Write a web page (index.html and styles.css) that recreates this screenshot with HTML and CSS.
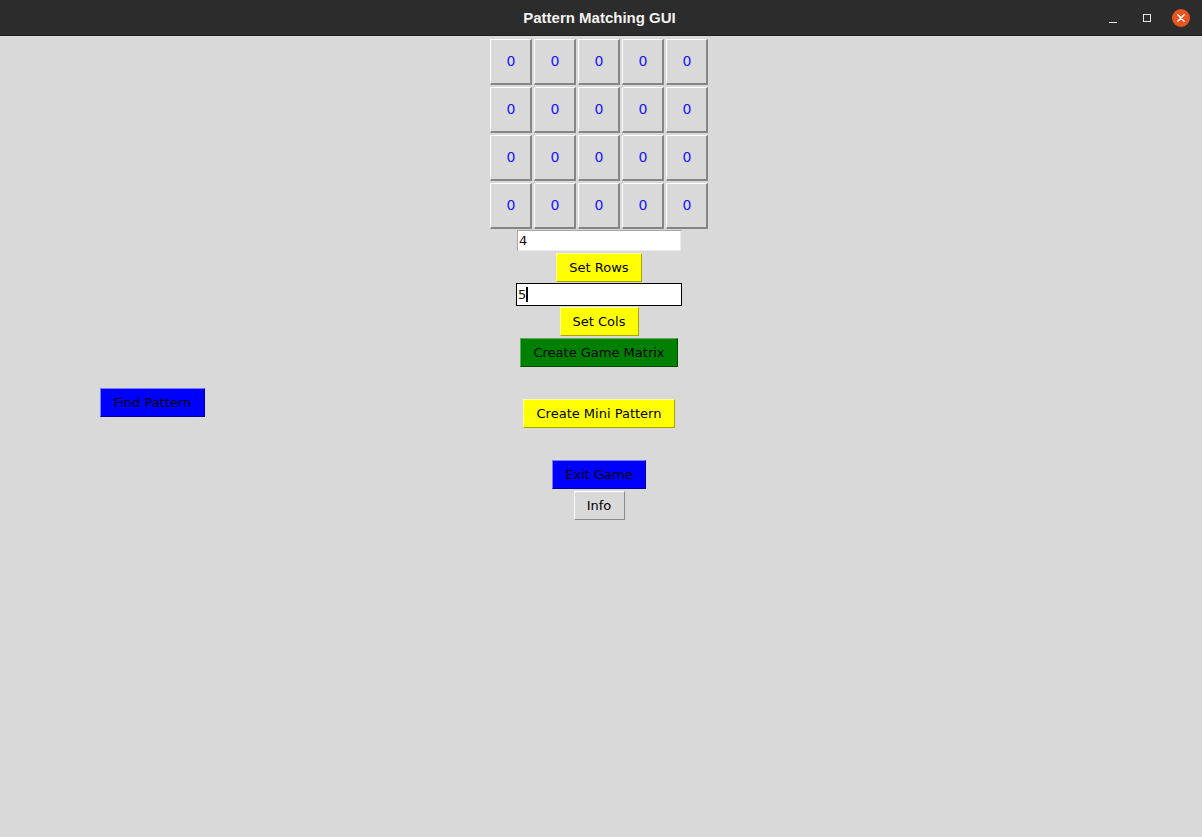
FILE: index.html
```html
<!DOCTYPE html>
<html>
<head>
<meta charset="utf-8">
<title>Pattern Matching GUI</title>
<link rel="stylesheet" href="styles.css">
</head>
<body>
<div class="titlebar">
  <div class="title">Pattern Matching GUI</div>
  <div class="controls">
    <span class="ctl min"></span>
    <span class="ctl max"></span>
    <span class="ctl close">
      <svg width="18" height="18" viewBox="0 0 18 18"><circle cx="9" cy="9" r="9" fill="#e95420"/><path d="M5.8 5.8 L12.2 12.2 M12.2 5.8 L5.8 12.2" stroke="#fff" stroke-width="1.5" stroke-linecap="round"/></svg>
    </span>
  </div>
</div>
<div class="main">
  <div class="matrix">
    <div class="cell">0</div><div class="cell">0</div><div class="cell">0</div><div class="cell">0</div><div class="cell">0</div>
    <div class="cell">0</div><div class="cell">0</div><div class="cell">0</div><div class="cell">0</div><div class="cell">0</div>
    <div class="cell">0</div><div class="cell">0</div><div class="cell">0</div><div class="cell">0</div><div class="cell">0</div>
    <div class="cell">0</div><div class="cell">0</div><div class="cell">0</div><div class="cell">0</div><div class="cell">0</div>
  </div>
  <div class="entry entry-rows"><span class="val">4</span></div>
  <div class="btn yellow set-rows">Set Rows</div>
  <div class="entry entry-cols focused"><span class="val">5</span><span class="caret"></span></div>
  <div class="btn yellow set-cols">Set Cols</div>
  <div class="btn green create-matrix">Create Game Matrix</div>
  <div class="pattern-row">
    <div class="btn blue find">Find Pattern</div>
    <div class="btn yellow mini">Create Mini Pattern</div>
  </div>
  <div class="btn blue exit">Exit Game</div>
  <div class="btn grey info">Info</div>
</div>
</body>
</html>
```
FILE: styles.css
```css
html, body {
  margin: 0;
  padding: 0;
}
body {
  background: #d9d9d9;
  width: 1202px;
  height: 837px;
  overflow: hidden;
  font-family: "DejaVu Sans", "Liberation Sans", sans-serif;
  font-size: 13px;
  color: #000;
}
.titlebar {
  height: 36px;
  background: #2c2c2c;
  display: flex;
  align-items: center;
  justify-content: center;
  position: relative;
  border-bottom: 1px solid #1e1e1e;
  box-sizing: border-box;
}
.title {
  font-family: "Liberation Sans", "DejaVu Sans", sans-serif;
  font-weight: bold;
  font-size: 15px;
  color: #f2f2f2;
  margin-left: -3px;
}
.controls {
  position: absolute;
  right: 12px;
  top: 9px;
  display: flex;
  align-items: center;
}
.ctl {
  display: block;
}
.min {
  width: 8px;
  height: 1px;
  background: #e6e6e6;
  margin-top: 8px;
  margin-right: 26px;
}
.max {
  width: 6px;
  height: 6px;
  border: 1px solid #e6e6e6;
  margin-right: 21px;
}
.close {
  width: 18px;
  height: 18px;
}
.close svg {
  display: block;
}
.main {
  display: flex;
  flex-direction: column;
  align-items: center;
  padding-right: 4px;
}
.matrix {
  margin-top: 3px;
  display: grid;
  grid-template-columns: repeat(5, 42px);
  grid-auto-rows: 46px;
  column-gap: 2px;
  row-gap: 2px;
}
.cell {
  box-sizing: border-box;
  border-top: 1px solid #ffffff;
  border-left: 1px solid #ffffff;
  border-right: 2px solid #858585;
  border-bottom: 2px solid #858585;
  background: #d9d9d9;
  color: #1414ff;
  font-size: 14px;
  display: flex;
  align-items: center;
  justify-content: center;
  padding-bottom: 2px;
  padding-left: 1px;
}
.entry {
  box-sizing: border-box;
  width: 166px;
  height: 23px;
  background: #ffffff;
  border: 1px solid #d9d9d9;
  box-shadow: inset 1px 1px 0 #a8a8a8, inset -1px -1px 0 #ececec;
  display: flex;
  align-items: center;
  padding-left: 2px;
}
.entry.focused {
  border: 1px solid #000000;
  box-shadow: none;
  padding-left: 1px;
}
.val {
  color: #1a0a0a;
  line-height: 1;
}
.caret {
  display: block;
  width: 2px;
  height: 15px;
  background: #000;
}
.btn {
  box-sizing: border-box;
  height: 29px;
  display: flex;
  align-items: center;
  justify-content: center;
  border: 1px solid;
  white-space: nowrap;
}
.yellow {
  background: #ffff00;
  border-color: #ffff9a #a6a600 #a6a600 #ffff9a;
}
.green {
  background: #008000;
  border-color: #5fa65f #004d00 #004d00 #5fa65f;
}
.blue {
  background: #0000ff;
  border-color: #7a7aff #00009a #00009a #7a7aff;
}
.grey {
  background: #d9d9d9;
  border-color: #ffffff #8a8a8a #8a8a8a #ffffff;
}
.set-rows {
  width: 86px;
  margin-top: 1px;
}
.entry-cols {
  margin-top: 1px;
}
.set-cols {
  width: 79px;
  margin-top: 1px;
}
.create-matrix {
  width: 158px;
  margin-top: 2px;
}
.pattern-row {
  align-self: stretch;
  display: grid;
  grid-template-columns: 1fr auto 1fr;
  margin-top: 21px;
  align-items: start;
}
.find {
  width: 105px;
  margin-left: 100px;
  grid-column: 1;
  justify-self: start;
}
.mini {
  width: 152px;
  margin-top: 11px;
  grid-column: 2;
}
.exit {
  width: 94px;
  margin-top: 32px;
}
.info {
  width: 51px;
  margin-top: 2px;
}
```
